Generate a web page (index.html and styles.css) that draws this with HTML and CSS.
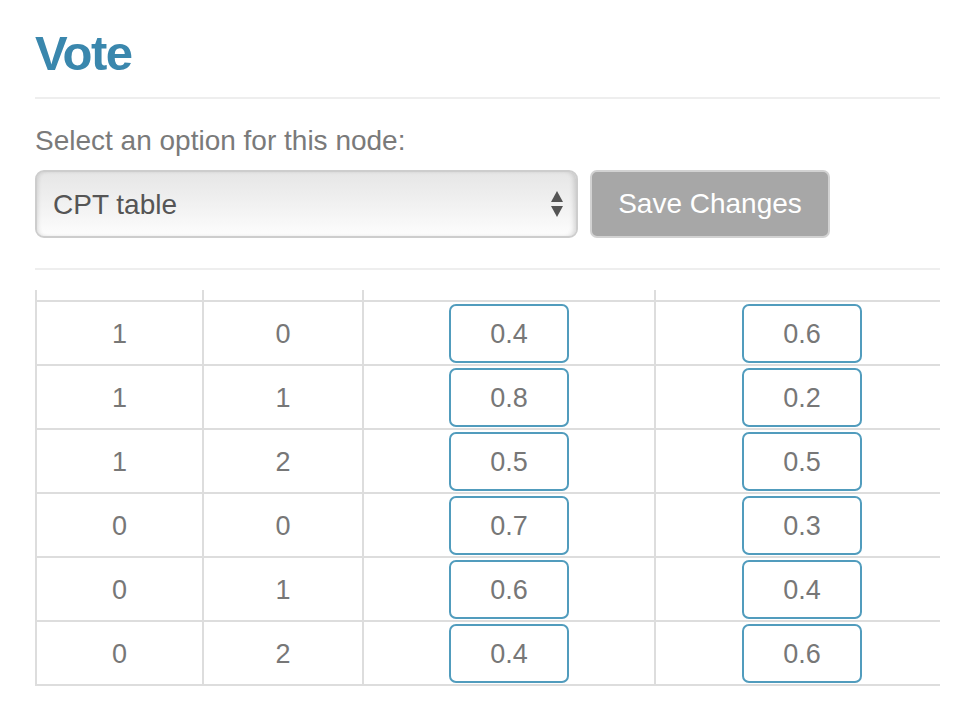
FILE: index.html
```html
<!DOCTYPE html>
<html>
<head>
<meta charset="utf-8">
<link rel="stylesheet" href="styles.css">
</head>
<body>
<div class="page">
  <h3 class="title">Vote</h3>
  <div class="rule"></div>
  <label class="label" for="opt">Select an option for this node:</label>
  <div class="controls">
    <div class="select-wrap">
      <select id="opt" class="select">
        <option>CPT table</option>
      </select>
      <svg class="arrows" width="12" height="26" viewBox="0 0 12 26">
        <polygon points="6,0 12,11 0,11" fill="#555"/>
        <polygon points="0,15 12,15 6,26" fill="#555"/>
      </svg>
    </div>
    <button class="btn">Save Changes</button>
  </div>
  <div class="rule rule2"></div>
  <table class="cpt">
    <tr class="head"><td class="c1"></td><td class="c2"></td><td class="c3"></td><td class="c4"></td></tr>
    <tr><td class="c1">1</td><td class="c2">0</td><td class="c3"><input class="num" value="0.4"></td><td class="c4"><input class="num" value="0.6"></td></tr>
    <tr><td class="c1">1</td><td class="c2">1</td><td class="c3"><input class="num" value="0.8"></td><td class="c4"><input class="num" value="0.2"></td></tr>
    <tr><td class="c1">1</td><td class="c2">2</td><td class="c3"><input class="num" value="0.5"></td><td class="c4"><input class="num" value="0.5"></td></tr>
    <tr><td class="c1">0</td><td class="c2">0</td><td class="c3"><input class="num" value="0.7"></td><td class="c4"><input class="num" value="0.3"></td></tr>
    <tr><td class="c1">0</td><td class="c2">1</td><td class="c3"><input class="num" value="0.6"></td><td class="c4"><input class="num" value="0.4"></td></tr>
    <tr><td class="c1">0</td><td class="c2">2</td><td class="c3"><input class="num" value="0.4"></td><td class="c4"><input class="num" value="0.6"></td></tr>
  </table>
</div>
</body>
</html>
```
FILE: styles.css
```css
html, body {
  margin: 0;
  padding: 0;
  background: #fff;
}
body {
  font-family: "Liberation Sans", Arial, sans-serif;
  color: #777;
}
.page {
  width: 905px;
  padding: 23px 0 0 35px;
}
.title {
  margin: 0;
  font-size: 49px;
  line-height: 60px;
  font-weight: bold;
  letter-spacing: -1.5px;
  color: #3a87ad;
}
.rule {
  height: 2px;
  background: #eee;
  margin-top: 14px;
}
.label {
  display: block;
  margin-top: 22px;
  font-size: 28px;
  line-height: 40px;
  color: #7a7a7a;
}
.controls {
  display: flex;
  gap: 12px;
  margin-top: 9px;
}
.select-wrap {
  position: relative;
  width: 543px;
  height: 68px;
}
.select {
  appearance: none;
  -webkit-appearance: none;
  box-sizing: border-box;
  width: 100%;
  height: 100%;
  margin: 0;
  border: 2px solid #cdcdcd;
  border-radius: 9px;
  padding: 0 0 0 16px;
  background: linear-gradient(#e6e6e6, #f2f2f2 55%, #fdfdfd);
  box-shadow: inset 3px 0 4px -2px rgba(0,0,0,0.12), inset -4px 0 5px -2px rgba(0,0,0,0.15);
  font-family: "Liberation Sans", Arial, sans-serif;
  font-size: 28px;
  color: #555;
}
.arrows {
  position: absolute;
  right: 15px;
  top: 21px;
  pointer-events: none;
}
.btn {
  box-sizing: border-box;
  width: 240px;
  height: 68px;
  margin: 0;
  border: 2px solid #d2d2d2;
  border-radius: 7px;
  background: #a7a7a7;
  color: #fff;
  font-family: "Liberation Sans", Arial, sans-serif;
  font-size: 28px;
  padding: 0;
}
.rule2 {
  margin-top: 30px;
}
.cpt {
  margin-top: 20px;
  width: 905px;
  table-layout: fixed;
  border-collapse: separate;
  border-spacing: 0;
  border-bottom: 2px solid #ddd;
}
.cpt td {
  box-sizing: border-box;
  border-left: 2px solid #ddd;
  border-top: 2px solid #ddd;
  height: 64px;
  padding: 2px 0 1px;
  text-align: center;
  vertical-align: middle;
  font-size: 27px;
  color: #777;
}
.cpt td.c1,
.cpt td.c2 {
  padding: 4px 0 1px;
}
.cpt .head td {
  border-top: none;
  height: 10px;
  padding: 0;
}
.cpt td.c4 {
  padding-left: 8px;
}
.c1 { width: 167px; }
.c2 { width: 160px; }
.c3 { width: 292px; }
.c4 { width: 286px; }
.num {
  display: block;
  box-sizing: border-box;
  width: 120px;
  height: 59px;
  margin: 0 auto;
  border: 2px solid #519cbd;
  border-radius: 7px;
  background: #fff;
  text-align: center;
  font-family: "Liberation Sans", Arial, sans-serif;
  font-size: 27px;
  color: #777;
  padding: 2px 0 0;
  outline: none;
}
```
